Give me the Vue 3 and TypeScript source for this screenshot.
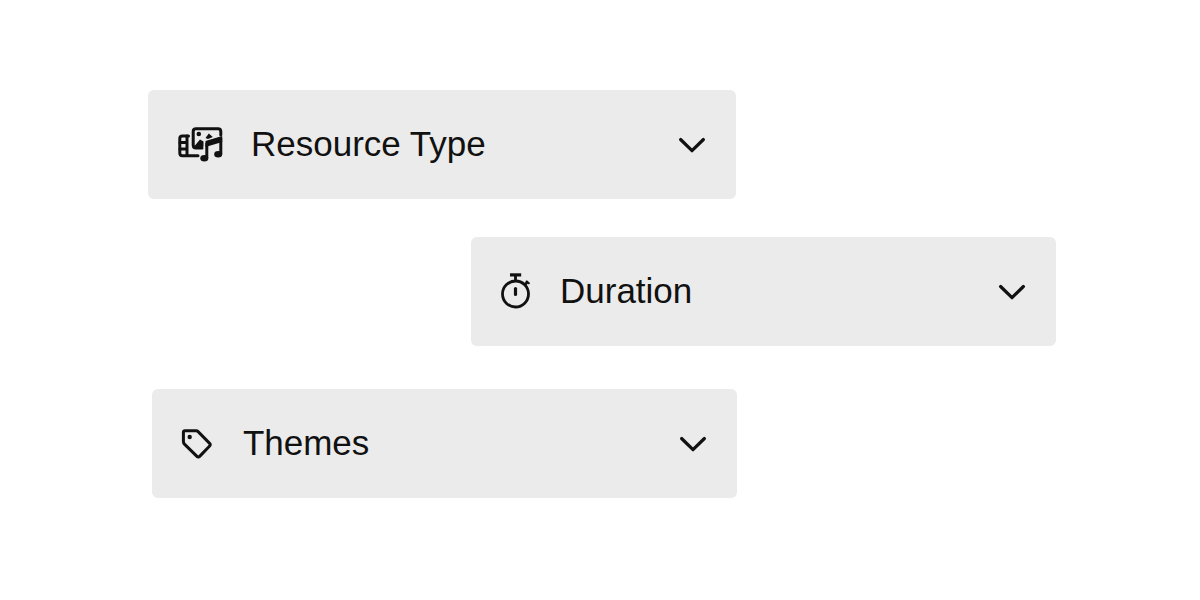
<script setup lang="ts">
import { ref } from 'vue'

interface Filter {
  id: string
  label: string
}

const filters: Filter[] = [
  { id: 'resource', label: 'Resource Type' },
  { id: 'duration', label: 'Duration' },
  { id: 'themes', label: 'Themes' },
]

const openId = ref<string | null>(null)

function toggle(id: string) {
  openId.value = openId.value === id ? null : id
}
</script>

<template>
  <main class="filters">
    <button
      v-for="filter in filters"
      :key="filter.id"
      type="button"
      class="filter"
      :class="filter.id"
      :aria-expanded="openId === filter.id"
      @click="toggle(filter.id)"
    >
      <svg v-if="filter.id === 'resource'" class="icon wide" viewBox="0 0 46 38" aria-hidden="true">
        <g fill="none" stroke="#111" stroke-width="3" stroke-linecap="round" stroke-linejoin="round">
          <path d="M11.5 11H5.5Q2.8 11 2.8 13.5V28Q2.8 30.7 5.5 30.7H21" />
          <path d="M10 11V30.5M3 17.5H10M3 24.1H10" />
          <path d="M25 23H19Q16.2 23 16.2 20V6.5Q16.2 3.7 19 3.7H41Q43.8 3.7 43.8 6.5V10" />
        </g>
        <circle cx="21.8" cy="9" r="2.3" fill="#111" />
        <path d="M17.5 21L23 14.5L26.5 16.5V21.5L24 23.5H17.5ZM28.5 13L31.8 8.5L35.8 12L31 14Z" fill="#111" />
        <path d="M29.8 18L43.8 13.5V29" fill="none" stroke="#111" stroke-width="3" stroke-linejoin="round" />
        <path d="M28.5 16L45.2 11V17L28.5 22Z" fill="#111" />
        <path d="M29.8 18V33" stroke="#111" stroke-width="3" />
        <ellipse cx="27.3" cy="33.2" rx="4" ry="3.2" fill="#111" />
        <ellipse cx="41.2" cy="29.2" rx="4" ry="3.2" fill="#111" />
      </svg>

      <svg v-else-if="filter.id === 'duration'" class="icon" viewBox="0 0 32 38" aria-hidden="true">
        <g fill="none" stroke="#111" stroke-width="2.8">
          <circle cx="15.5" cy="22" r="13" />
          <path d="M10 2.9H21.2" stroke-width="3.2" />
          <path d="M15.5 3.4V9M24.5 13L28 9.5" />
          <path d="M26 9L29.5 11.7" stroke-width="2" />
          <path d="M15.5 16.5V22.5" stroke-width="3.2" stroke-linecap="round" />
        </g>
      </svg>

      <svg v-else class="icon tag" viewBox="0 0 34 38" aria-hidden="true">
        <path
          d="M4 6.8H15.2Q16.3 6.8 17.1 7.6L28.4 19.1Q30 20.7 28.4 22.3L18.9 32.1Q17.3 33.7 15.7 32.1L3.7 20.4Q2.4 19.2 2.4 17.5V8.4Q2.4 6.8 4 6.8Z"
          fill="none"
          stroke="#111"
          stroke-width="3"
          stroke-linejoin="round"
        />
        <circle cx="8.7" cy="13" r="2.2" fill="#111" />
      </svg>

      <span class="label">{{ filter.label }}</span>

      <svg class="chevron" viewBox="0 0 28 20" aria-hidden="true">
        <path
          d="M2.6 5.5L14 16.7L25.4 5.5"
          fill="none"
          stroke="#111"
          stroke-width="3.2"
          stroke-linecap="round"
          stroke-linejoin="round"
        />
      </svg>
    </button>
  </main>
</template>

<style>
body {
  margin: 0;
  background: #fff;
}
</style>

<style scoped>
.filters {
  display: flex;
  flex-direction: column;
  align-items: flex-start;
  padding: 90px 0;
}

.filter {
  display: flex;
  align-items: center;
  gap: 28px;
  box-sizing: border-box;
  width: 48.75%;
  padding: 34px 30px 35px 29px;
  border: 0;
  border-radius: 6px;
  background: #ebebeb;
  color: #111;
  font-family: "Liberation Sans", Arial, sans-serif;
  font-size: 35px;
  line-height: 40px;
  text-align: left;
  cursor: pointer;
}

.resource {
  width: 49%;
  margin-left: 12.33%;
}

.duration {
  margin-top: 38px;
  margin-left: 39.25%;
}

.themes {
  margin-top: 43px;
  margin-left: 12.66%;
}

.icon {
  flex: none;
  width: 32px;
  height: 38px;
}

.wide {
  width: 46px;
}

.tag {
  width: 34px;
}

.label {
  flex: 1;
}

.chevron {
  flex: none;
  width: 28px;
  height: 20px;
}
</style>
